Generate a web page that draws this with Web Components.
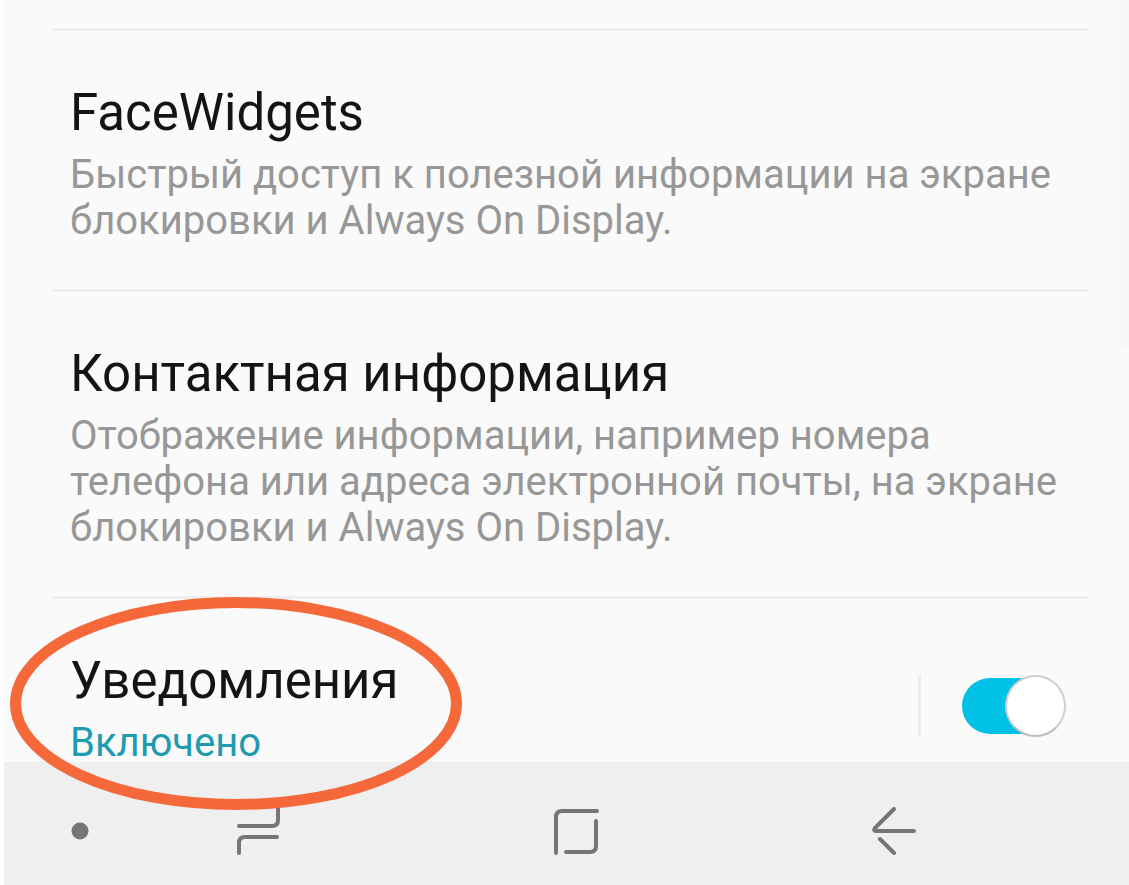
<!DOCTYPE html>
<html lang="ru">
<head>
<meta charset="utf-8">
<meta name="viewport" content="width=device-width, initial-scale=1">
<title>Экран блокировки</title>
<style>
  body { margin: 0; background: #fafafa; font-family: Roboto, "Noto Sans", sans-serif; }
</style>
</head>
<body>
<lock-settings>
  <settings-row>
    <span slot="title">FaceWidgets</span>
    Быстрый доступ к полезной информации на экране блокировки и Always On Display.
  </settings-row>
  <settings-row>
    <span slot="title">Контактная информация</span>
    Отображение информации, например номера телефона или адреса электронной почты, на экране блокировки и Always On Display.
  </settings-row>
  <switch-row>
    <span slot="title">Уведомления</span>
    Включено
  </switch-row>
  <system-nav slot="nav"></system-nav>
</lock-settings>

<script>
const define = (name, html) => customElements.define(name, class extends HTMLElement {
  constructor() {
    super();
    this.attachShadow({ mode: "open" }).innerHTML = html;
  }
});

define("lock-settings", `
  <style>
    :host { display: flex; flex-direction: column; min-height: 100vh; box-sizing: border-box;
            border-left: 4px solid #fefefe; position: relative; }
    main { flex: 1; padding: 28px 40px 0 49px; }
    .scroll { position: absolute; top: 0; right: 0; width: 8px; height: 348px; background: #f6f6f6; }
  </style>
  <main><slot></slot></main>
  <slot name="nav"></slot>
  <div class="scroll"></div>
`);

define("settings-row", `
  <style>
    :host { display: block; border-top: 3px solid #eee; padding: 52px 10px 45px 17px; }
    h2 { margin: 0 0 9px; font-size: 51px; line-height: 60px; font-weight: 400; color: #141414; }
    p { margin: 0; font-size: 40px; line-height: 46px; color: #979797; }
  </style>
  <h2><slot name="title"></slot></h2>
  <p><slot></slot></p>
`);

define("switch-row", `
  <style>
    :host { display: flex; align-items: flex-start; border-top: 3px solid #eee; padding: 52px 23px 0 17px; }
    .text { flex: 1; position: relative; }
    label { display: block; margin-bottom: 13px; font-size: 51px; line-height: 60px; color: #141414; }
    p { margin: 0; font-size: 40px; line-height: 38px; color: #1d9bb0; }
    .ring { position: absolute; z-index: 2; left: -60px; top: -54px; width: 452px; height: 213px;
            pointer-events: none; }
    .line { width: 3px; height: 62px; margin: 24px 41px 0 0; background: #ededed; }
    input { appearance: none; position: relative; display: flex; align-items: center; justify-content: flex-start;
            width: 104px; height: 62px; margin: 24px 0 0; cursor: pointer; }
    input:checked { justify-content: flex-end; }
    input::before { content: ""; position: absolute; left: 0; top: 3px; width: 96px; height: 56px;
            border-radius: 28px; background: #c4c4c4; }
    input:checked::before { background: #02c1e6; }
    input::after { content: ""; position: relative; box-sizing: border-box; width: 61px; height: 62px;
            border-radius: 50%; background: #fff; border: 2px solid #cfcfcf; border-bottom-color: #bdbdbd; }
  </style>
  <div class="text">
    <label for="toggle"><slot name="title"></slot></label>
    <p><slot></slot></p>
    <svg class="ring" viewBox="0 0 452 213" aria-hidden="true">
      <ellipse cx="226" cy="106.5" rx="220.500" ry="101" fill="none" stroke="#f4683a" stroke-width="11"/>
    </svg>
  </div>
  <div class="line"></div>
  <input id="toggle" type="checkbox" role="switch" checked>
`);

define("system-nav", `
  <style>
    :host { display: block; background: #efefef; }
    nav { display: flex; align-items: center; height: 123px; gap: 130px;
          padding: 14px 210px 0 52px; box-sizing: border-box; }
    .keys { flex: 1; display: flex; justify-content: space-between; }
    button { border: 0; padding: 0; background: none; width: 48px; height: 48px; cursor: pointer; }
    svg { display: block; width: 48px; height: 48px; fill: none; stroke: #757575; stroke-width: 4;
          stroke-linecap: round; stroke-linejoin: round; }
  </style>
  <nav>
    <button aria-label="Скрыть панель"><svg viewBox="0 0 48 48"><circle cx="24" cy="24" r="8.500" fill="#757575" stroke="none"/></svg></button>
    <div class="keys">
      <button aria-label="Последние"><svg viewBox="0 0 48 48"><path d="M44 0V13Q44 19 38 19H5M5 46V36Q5 30 11 30H43"/></svg></button>
      <button aria-label="Главный экран"><svg viewBox="0 0 48 48"><path d="M3 46V10Q3 4 9 4H44M43 14V39Q43 45 37 45H13"/></svg></button>
      <button aria-label="Назад"><svg viewBox="0 0 48 48"><path d="M23 2L4 21Q2 24 5 24H43M9 32L23 46"/></svg></button>
    </div>
  </nav>
`);
</script>
</body>
</html>
